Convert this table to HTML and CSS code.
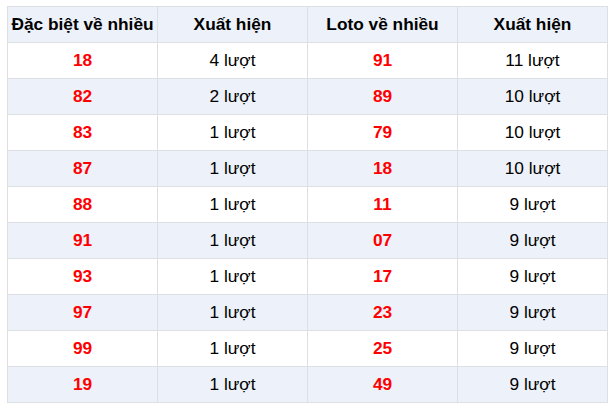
FILE: index.html
```html
<!DOCTYPE html>
<html>
<head>
<meta charset="utf-8">
<link rel="stylesheet" href="styles.css">
</head>
<body>
<table class="stats">
<thead>
<tr><th>Đặc biệt về nhiều</th><th>Xuất hiện</th><th>Loto về nhiều</th><th>Xuất hiện</th></tr>
</thead>
<tbody>
<tr><td class="num">18</td><td>4 lượt</td><td class="num">91</td><td>11 lượt</td></tr>
<tr><td class="num">82</td><td>2 lượt</td><td class="num">89</td><td>10 lượt</td></tr>
<tr><td class="num">83</td><td>1 lượt</td><td class="num">79</td><td>10 lượt</td></tr>
<tr><td class="num">87</td><td>1 lượt</td><td class="num">18</td><td>10 lượt</td></tr>
<tr><td class="num">88</td><td>1 lượt</td><td class="num">11</td><td>9 lượt</td></tr>
<tr><td class="num">91</td><td>1 lượt</td><td class="num">07</td><td>9 lượt</td></tr>
<tr><td class="num">93</td><td>1 lượt</td><td class="num">17</td><td>9 lượt</td></tr>
<tr><td class="num">97</td><td>1 lượt</td><td class="num">23</td><td>9 lượt</td></tr>
<tr><td class="num">99</td><td>1 lượt</td><td class="num">25</td><td>9 lượt</td></tr>
<tr><td class="num">19</td><td>1 lượt</td><td class="num">49</td><td>9 lượt</td></tr>
</tbody>
</table>
</body>
</html>
```
FILE: styles.css
```css
html, body {
  margin: 0;
  padding: 0;
  background: #ffffff;
}
body {
  padding: 6px 0 0 7px;
  font-family: "Liberation Sans", Arial, sans-serif;
  font-size: 17.3px;
  color: #000;
}
.stats {
  border-collapse: collapse;
  width: 601px;
  table-layout: fixed;
}
.stats th, .stats td {
  border: 1px solid #dddfe3;
  height: 35px;
  padding: 0;
  text-align: center;
  vertical-align: middle;
}
.stats th {
  background: #edf1f9;
  font-weight: bold;
}
.stats tbody tr:nth-child(even) td {
  background: #edf1f9;
}
.stats td.num {
  color: #ff0000;
  font-weight: bold;
}
```
